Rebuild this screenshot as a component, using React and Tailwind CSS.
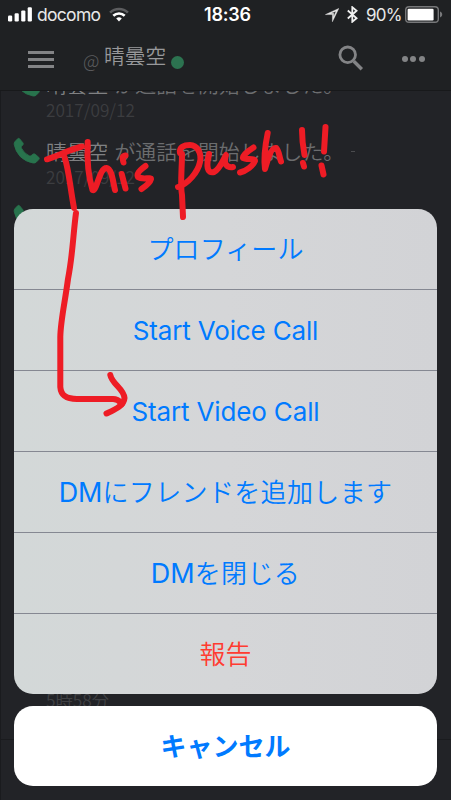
import React from 'react';

const actions = [
  { label: 'プロフィール', className: 'text-[#007aff] tracking-[0.1px]' },
  { label: 'Start Voice Call', latin: true, className: 'text-[#007aff] tracking-[-0.15px]' },
  { label: 'Start Video Call', latin: true, className: 'text-[#007aff] tracking-[-0.15px]' },
  { prefix: 'DM', label: 'にフレンドを追加します', className: 'text-[#007aff] tracking-[0.35px]' },
  { prefix: 'DM', label: 'を閉じる', className: 'text-[#007aff] tracking-[0.35px]' },
  { label: '報告', className: 'text-[#ff3b30]' },
];

const calls = [
  { id: 1, name: '晴曇空', date: '2017/09/12' },
  { id: 2, name: '晴曇空', date: '2017/09/12' },
  { id: 3, name: '晴曇空', date: '2017/09/12' },
];

function StatusBar() {
  return (
    <div className="flex h-[29px] items-center text-white">
      <svg className="ml-2 h-[15px] w-6 shrink-0" viewBox="0 0 24 15" fill="currentColor">
        <rect x="0" y="8.5" width="4.2" height="6" rx="1.2" />
        <rect x="6.6" y="6.2" width="4.2" height="8.3" rx="1.2" />
        <rect x="13.2" y="3.4" width="4.2" height="11.1" rx="1.2" />
        <rect x="19.7" y="0.3" width="4.2" height="14.2" rx="1.2" />
      </svg>
      <span className="ml-[5px] mt-px w-[64px] shrink-0 whitespace-nowrap text-[17.5px] leading-none tracking-[-0.7px] text-[#e8e8e8]">docomo</span>
      <svg className="ml-[8px] h-[15px] w-5 shrink-0" viewBox="0 0 20 15" fill="none" stroke="white" strokeWidth="2.6">
        <path d="M1.1 5.6a12.7 12.7 0 0 1 17.8 0" stroke="#5c5d5f" />
        <path d="M4.3 8.8a8.2 8.2 0 0 1 11.4 0" />
        <path d="M10 14.4l-2.8-2.9a4 4 0 0 1 5.6 0z" fill="white" stroke="none" />
      </svg>
      <span className="ml-[75px] w-[47px] shrink-0 whitespace-nowrap text-[18px] font-semibold leading-none tracking-[-0.2px]">18:36</span>
      <svg className="ml-[74px] h-[14px] w-[14px] shrink-0" viewBox="0 0 14 14">
        <path d="M13.8 0.4L0.4 6.6H7.4V13.8zM11 3.2L8.7 8.7V5.3H5.9z" fill="#e8e8e8" stroke="#e8e8e8" strokeWidth="0.4" fillRule="evenodd" />
      </svg>
      <svg className="ml-[8px] h-[17px] w-[11px] shrink-0" viewBox="0 0 11 17" fill="none" stroke="#f0f0f0" strokeWidth="1.8">
        <path d="M0.8 4.5l8.8 7.7-4.3 3.6V1.2l4.3 3.6-8.8 7.7" />
      </svg>
      <span className="ml-[8px] mt-px w-[35px] shrink-0 whitespace-nowrap text-[17px] leading-none tracking-[-0.7px] text-[#e8e8e8]">90%</span>
      <svg className="ml-[4px] h-[17px] w-[38px] shrink-0" viewBox="0 0 38 17">
        <rect x="0.7" y="0.7" width="32.6" height="15.6" rx="3.4" fill="none" stroke="#77787a" strokeWidth="1.4" />
        <rect x="2.6" y="2.8" width="26" height="11.6" rx="1.2" fill="white" />
        <path d="M35 5.6c1.6.6 2.2 1.6 2.2 2.9s-.6 2.3-2.2 2.9z" fill="#77787a" />
      </svg>
    </div>
  );
}

function Header() {
  return (
    <header className="h-[91px] shrink-0 border-b border-[#18191b] bg-[#1f2123]">
      <StatusBar />
      <div className="flex h-[61px] items-center">
        <div className="ml-7 flex w-[26px] flex-col gap-[4.5px]">
          <span className="h-[2.5px] bg-[#838486]" />
          <span className="h-[2.5px] bg-[#838486]" />
          <span className="h-[2.5px] bg-[#838486]" />
        </div>
        <span className="ml-[29px] mt-px w-[18px] font-['Noto_Sans_CJK_JP',sans-serif] text-[18px] font-light leading-none text-[#5c5d5f]">@</span>
        <span className="ml-[3px] -mt-2 w-[62px] whitespace-nowrap font-['Noto_Sans_CJK_JP',sans-serif] text-[20.7px] font-[350] leading-none text-[#97989a]">晴曇空</span>
        <span className="ml-[5px] mt-1.5 h-[13px] w-[12.5px] rounded-full bg-[#2c7350]" />
        <svg className="ml-[154px] -mt-[3px] h-[26px] w-[26px]" viewBox="0 0 26 26" fill="none" stroke="#838486">
          <circle cx="9.7" cy="9.8" r="7.8" strokeWidth="2.8" />
          <path d="M15.8 16.2l8 8" strokeWidth="3.4" />
        </svg>
        <div className="ml-[38px] -mt-[2px] flex gap-[2.5px]">
          <span className="h-[6px] w-[6px] rounded-full bg-[#838486]" />
          <span className="h-[6px] w-[6px] rounded-full bg-[#838486]" />
          <span className="h-[6px] w-[6px] rounded-full bg-[#838486]" />
        </div>
      </div>
    </header>
  );
}

function PhoneIcon({ className }) {
  return (
    <svg className={className} viewBox="0 0 26 26" fill="currentColor" stroke="currentColor" strokeWidth="0.8">
      <path d="M1 3.6L3.6 0.8Q4.9 -.3 5.8 1L9 4.9Q9.7 6 8.8 7L7.5 8.3Q6.9 9.1 7.5 10.2Q10 15.300 15.200 17.800Q16.300 18.400 17.200 17.600L18.900 16.200Q20 15.400 21.100 16.200L24.700 19.200Q25.900 20.300 24.800 21.500L22.200 24.200Q21 25.300 19 25Q11.500 23.700 6.400 18.700Q1.400 13.400 0.200 6.500Q-.1 4.800 1 3.600Z" />
    </svg>
  );
}

function CallRow({ name, date }) {
  return (
    <li className="flex h-[67px] shrink-0 pl-[13px]">
      <PhoneIcon className="h-[26px] w-[26px] shrink-0 overflow-visible text-[#28734d]" />
      <div className="ml-[6px]">
        <p className="flex h-[27px] items-center whitespace-nowrap text-[20.8px] font-[350] leading-none text-[#6c6d6f]">
          <span className="text-[#808183]">{name}</span>
          <span className="ml-[6px] tracking-[0.1px]">が通話を開始しました。</span>
          <span className="ml-[7px] h-px w-1 bg-[#4b4c4f]" />
        </p>
        <p className="mt-[3px] text-[17.2px] font-[350] leading-none text-[#3c3d40]">{date}</p>
      </div>
    </li>
  );
}

function ActionSheet() {
  return (
    <div className="absolute inset-x-[14px] top-[209px] flex flex-col gap-[12px]">
      <ul className="overflow-hidden rounded-[19px] bg-linear-to-r from-[#d3d8d8] via-[#d5d6d8] to-[#d2d3d6]">
        {actions.map((action) => (
          <li key={action.label} className="h-[81px] border-b border-[#858892] last:h-20 last:border-b-0">
            <button className={`flex h-full w-full items-center justify-center whitespace-nowrap pt-[2px] text-[26px] leading-none ${action.className}`}>
              {action.prefix && <span className="-mt-px text-[27px] tracking-normal">{action.prefix}</span>}
              <span className={action.latin ? 'font-normal' : "-mt-[4px] font-['Noto_Sans_CJK_JP',sans-serif] font-[350]"}>{action.label}</span>
            </button>
          </li>
        ))}
      </ul>
      <button className="flex h-20 w-full items-center justify-center rounded-[19px] bg-white pt-px text-[26px] font-bold leading-none text-[#007aff]">
        キャンセル
      </button>
    </div>
  );
}

// Hand drawn note pointing to the video call entry
function Scribble() {
  return (
    <svg
      className="pointer-events-none absolute inset-0 h-[800px] w-[451px]"
      viewBox="0 0 451 800"
      fill="none"
      stroke="#ee1c25"
      strokeWidth="6"
      strokeLinecap="round"
      strokeLinejoin="round"
    >
      <path d="M47 159.3C58 156 71 149 82 146.5" />
      <path d="M64.5 157C69 170 70 187 74 208" />
      <path d="M87.7 142C87 158 88 176 92.5 190C97 192 99 168 106.5 168C112 169 113 182 115 190" />
      <path d="M125.5 155.5C121 156 123 160 123.5 162.5M121.7 174L125.5 188.5" />
      <path d="M145.5 166C140 170 136 174 138 177C142 180 151 177 151 179C150 183 146 186 141.5 189" />
      <path d="M182 154C182 168 180 185 182 195L183 217" />
      <path d="M180 153C179 147 184 145 190 145C197 145 202 153 200 162C198 172 188 184 178 187" />
      <path d="M209 154C206 166 207 174 214 172C220 169 223 160 226 155C223 164 227 168 233 167" />
      <path d="M253.5 147.5C248 151 242 156 243 158C246 160 255 158 255 161C253 166 246 171 240 172.5" />
      <path d="M267.7 133C265 146 263.5 158 265 169C267 162 271 147 276 148C279 150 279 156 281 161.5" />
      <path d="M302 130C302 141 303 147 304.5 155M303 163L304 166.5" />
      <path d="M325.5 127L324 151.5M321.5 165.5L323.5 174.5" />
      <path d="M76 213C73 235 73 253 68 279C65 302 60.5 321 60.3 337V387C61 396 67 399 77 399H113C119 399 120 402 122 404" />
      <path d="M110.3 375C112 384 124 389 124.5 398C124 406 114 410 106.5 413.5" />
    </svg>
  );
}

function App() {
  return (
    <div className="relative flex h-[800px] w-[451px] flex-col overflow-hidden bg-[#222327] font-['Inter','Noto_Sans_CJK_JP',sans-serif]">
      <Header />
      <main className="flex min-h-0 flex-1 flex-col overflow-hidden border-l border-[#1a1b1e] font-['Noto_Sans_CJK_JP',sans-serif]">
        <ul className="-mt-5 flex flex-1 flex-col">
          {calls.map((call) => (
            <CallRow key={call.id} name={call.name} date={call.date} />
          ))}
        </ul>
        <p className="mb-[31px] ml-[45px] text-[17.3px] font-[350] leading-none text-[#404144]">5時58分</p>
      </main>
      <footer className="h-[61px] shrink-0 border-l border-t border-[#1a1b1e]" />
      <ActionSheet />
      <Scribble />
    </div>
  );
}

export default App;
